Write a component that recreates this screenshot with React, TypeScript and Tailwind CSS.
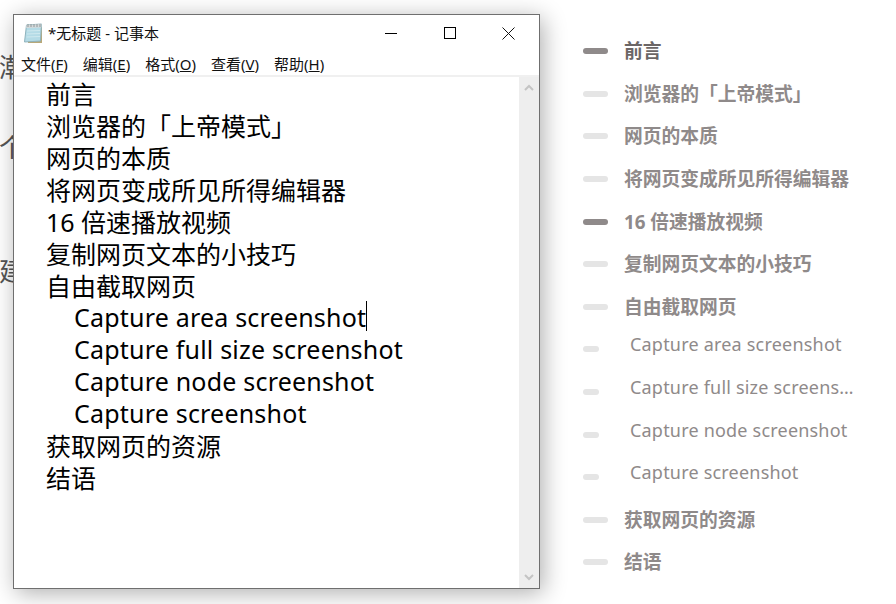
import React from 'react';

const CJK = "font-['Noto_Sans','Noto_Sans_CJK_SC',sans-serif]";

const menus = [
  ['文件(', 'F', ')'],
  ['编辑(', 'E', ')'],
  ['格式(', 'O', ')'],
  ['查看(', 'V', ')'],
  ['帮助(', 'H', ')'],
];

const lines = [
  { text: '前言' },
  { text: '浏览器的「上帝模式」' },
  { text: '网页的本质' },
  { text: '将网页变成所见所得编辑器' },
  { text: '16 倍速播放视频' },
  { text: '复制网页文本的小技巧' },
  { text: '自由截取网页' },
  { text: 'Capture area screenshot', sub: true, caret: true },
  { text: 'Capture full size screenshot', sub: true },
  { text: 'Capture node screenshot', sub: true },
  { text: 'Capture screenshot', sub: true },
  { text: '获取网页的资源' },
  { text: '结语' },
];

const outline = [
  { text: '前言', active: true, dark: true },
  { text: '浏览器的「上帝模式」' },
  { text: '网页的本质' },
  { text: '将网页变成所见所得编辑器' },
  { text: '16 倍速播放视频', active: true },
  { text: '复制网页文本的小技巧' },
  { text: '自由截取网页' },
  { text: 'Capture area screenshot', sub: true },
  { text: 'Capture full size screenshot', sub: true },
  { text: 'Capture node screenshot', sub: true },
  { text: 'Capture screenshot', sub: true },
  { text: '获取网页的资源' },
  { text: '结语' },
];

const NotepadIcon = () => (
  <svg width="21" height="21" viewBox="0 0 21 21" className="shrink-0">
    <path d="M4 5 L19 4 L19 20 L5 20 Z" fill="#b8a878" />
    <path d="M3.5 2 L18.5 1 L17.5 18 L1.5 19 Z" fill="#b4dbe6" stroke="#8fb3bd" strokeWidth="1" />
    <path d="M4 8 L17 7.5 M3.8 11 L17 10.5 M3.5 14 L17 13.5" stroke="#cfe9ef" strokeWidth="1" />
    <path d="M3.5 2 L18.5 1 L18.2 4.5 L3.2 5 Z" fill="#d5d9da" />
    <path d="M5 1 V4 M8 1 V4 M11 1 V4 M14 1 V4 M17 1 V4" stroke="#8e9799" strokeWidth="1" />
  </svg>
);

const Notepad = () => (
  <div className="w-[527px] h-[575px] shrink-0 flex flex-col bg-white border border-[#6f6f6f] shadow-[3px_4px_22px_rgba(0,0,0,0.32)] relative z-10">
    <div className="h-[36px] shrink-0 flex items-center">
      <div className="ml-[9px] mr-[4px] mt-[1px]"><NotepadIcon /></div>
      <span className={`${CJK} text-[15px] text-[#111]`}>*无标题 - 记事本</span>
      <div className="ml-auto mr-[2px] flex items-center">
        <div className="w-[58px] h-[36px] flex items-center justify-center">
          <div className="w-[12px] h-px bg-black" />
        </div>
        <div className="w-[59px] h-[36px] flex items-center justify-center">
          <div className="w-[12px] h-[12px] border border-black" />
        </div>
        <div className="w-[58px] h-[36px] flex items-center justify-center">
          <svg width="13" height="13" viewBox="0 0 13 13">
            <path d="M0.5 0.5 L12.5 12.5 M12.5 0.5 L0.5 12.5" stroke="#111" strokeWidth="1" />
          </svg>
        </div>
      </div>
    </div>
    <div className="h-[24px] shrink-0 flex items-center pl-[7px] pt-[1px] gap-[15px]">
      {menus.map(([a, key, b]) => (
        <span key={key} className={`${CJK} text-[15px] leading-[18px] text-[#111]`}>
          {a}<span className="underline">{key}</span>{b}
        </span>
      ))}
    </div>
    <div className="h-[2px] shrink-0 bg-[#f0f0f0]" />
    <div className="flex-1 min-h-0 flex">
      <div className={`${CJK} flex-1 pl-[32px] text-[25px] text-black`}>
        {lines.map((l) => (
          <div key={l.text} className={`h-[32px] leading-[32px] whitespace-nowrap ${l.sub ? 'pl-[28px] tracking-[0.2px]' : 'pt-[1px]'}`}>
            {l.text}
            {l.caret && <span className="inline-block w-px h-[30px] bg-black align-top" />}
          </div>
        ))}
      </div>
      <div className="w-[20px] shrink-0 bg-[#eeeeee] flex flex-col items-center justify-between py-[7px]">
        <svg width="10" height="7" viewBox="0 0 10 7">
          <path d="M1 6 L5 2 L9 6" fill="none" stroke="#c4c4c4" strokeWidth="2" />
        </svg>
        <svg width="10" height="7" viewBox="0 0 10 7">
          <path d="M1 1 L5 5 L9 1" fill="none" stroke="#c4c4c4" strokeWidth="2" />
        </svg>
      </div>
    </div>
  </div>
);

const Outline = () => (
  <div className="ml-[43px] mt-[16px] w-[273px] shrink-0 flex flex-col">
    {outline.map((o) => (
      <div key={o.text} className="h-[42.6px] shrink-0 flex items-center">
        <div className="w-[41px] shrink-0">
          <div
            className={`${o.sub ? 'w-[16px]' : 'w-[25px]'} h-[6px] rounded-full ${o.active ? 'bg-[#8f8a8a]' : 'bg-[#e5e5e5]'}`}
          />
        </div>
        {o.sub ? (
          <span className={`${CJK} block ml-[6px] pb-[9px] w-[226px] truncate text-[18px] tracking-[0.2px] text-[#8f8a8a]`}>
            {o.text}
          </span>
        ) : (
          <span className={`${CJK} block truncate text-[18.75px] font-bold ${o.dark ? 'text-[#6b6666]' : 'text-[#8f8a8a]'}`}>
            {o.text}
          </span>
        )}
      </div>
    ))}
  </div>
);

export default function App() {
  return (
    <div className="w-[896px] h-[604px] relative overflow-hidden bg-white">
      <div className={`${CJK} absolute left-[-1px] top-[54px] text-[26px] text-[#555] leading-none`}>潮</div>
      <div className={`${CJK} absolute left-[-1px] top-[134px] text-[26px] text-[#555] leading-none`}>个</div>
      <div className={`${CJK} absolute left-[-1px] top-[258px] text-[26px] text-[#555] leading-none`}>建</div>
      <div className="flex items-start pt-[14px] pl-[13px]">
        <Notepad />
        <Outline />
      </div>
    </div>
  );
}
